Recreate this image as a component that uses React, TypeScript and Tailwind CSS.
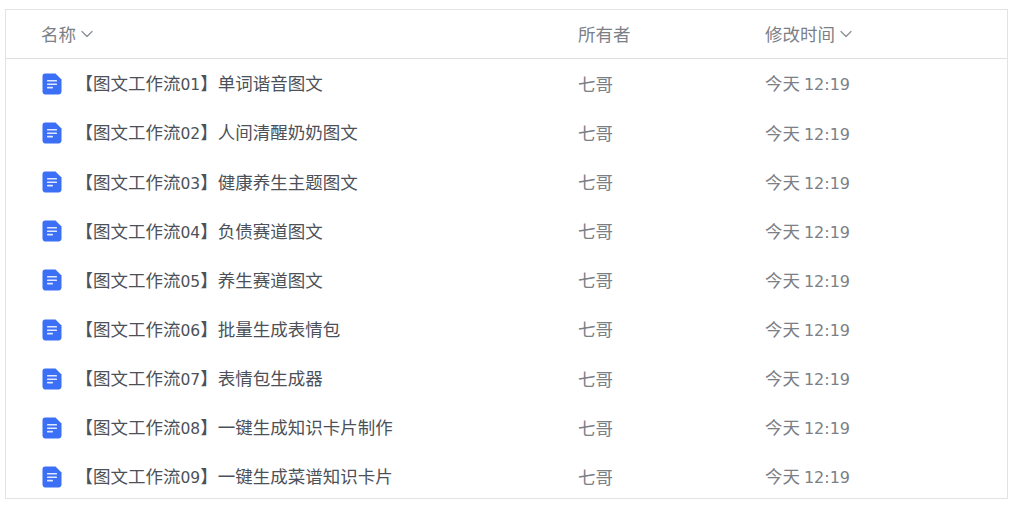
import { ChevronDown } from 'lucide-react';

const files = [
  { no: '01', title: '单词谐音图文' },
  { no: '02', title: '人间清醒奶奶图文' },
  { no: '03', title: '健康养生主题图文' },
  { no: '04', title: '负债赛道图文' },
  { no: '05', title: '养生赛道图文' },
  { no: '06', title: '批量生成表情包' },
  { no: '07', title: '表情包生成器' },
  { no: '08', title: '一键生成知识卡片制作' },
  { no: '09', title: '一键生成菜谱知识卡片' },
];

function DocIcon() {
  return (
    <svg width="20" height="22" viewBox="0 0 20 22" className="shrink-0">
      <path d="M3 0.5H13.5L19.5 6.5V18.5C19.5 20 18.5 21.5 16.5 21.5H3C1.5 21.5 0.5 20 0.5 18.5V3C0.5 1.5 1.5 0.5 3 0.5Z" fill="#3b6ff5" />
      <rect x="5" y="7" width="10" height="1.6" rx="0.6" fill="#dfe8fe" />
      <rect x="5" y="10.4" width="10" height="1.6" rx="0.6" fill="#dfe8fe" />
      <rect x="5" y="13.8" width="6" height="1.6" rx="0.6" fill="#dfe8fe" />
    </svg>
  );
}

export default function App() {
  return (
    <div className="h-[509px] w-[1024px] bg-white pl-[5px] pt-[9px] font-['Noto_Sans_CJK_SC',sans-serif]">
      <div className="h-[490px] w-[1003px] overflow-hidden border border-[#e2e3e6]">
        {/* Header */}
        <div className="flex h-[49px] items-center border-b border-[#dfe0e3] text-[17.5px] text-[#7b8087]">
          <div className="flex w-[572px] items-center pl-[35px]">
            <span>名称</span>
            <ChevronDown className="ml-[1px] h-5 w-5 text-[#8b9096]" strokeWidth={1.5} />
          </div>
          <div className="w-[187px]">所有者</div>
          <div className="flex items-center">
            <span>修改时间</span>
            <ChevronDown className="ml-[1px] h-5 w-5 text-[#8b9096]" strokeWidth={1.5} />
          </div>
        </div>

        {/* Rows */}
        <div className="pt-[0.4px]">
          {files.map((file) => (
            <div key={file.no} className="flex h-[49.125px] items-center text-[17.5px]">
              <div className="flex w-[572px] items-center pl-[36px]">
                <DocIcon />
                <span className="ml-[13.5px] text-[#4c5159]">
                  【图文工作流<span className="font-['DejaVu_Sans'] text-[15.5px]">{file.no}</span>】{file.title}
                </span>
              </div>
              <div className="w-[187px] text-[#7b8087]">七哥</div>
              <div className="text-[#7b8087]">
                今天 <span className="font-['DejaVu_Sans'] text-[16px]">12:19</span>
              </div>
            </div>
          ))}
        </div>
      </div>
    </div>
  );
}
